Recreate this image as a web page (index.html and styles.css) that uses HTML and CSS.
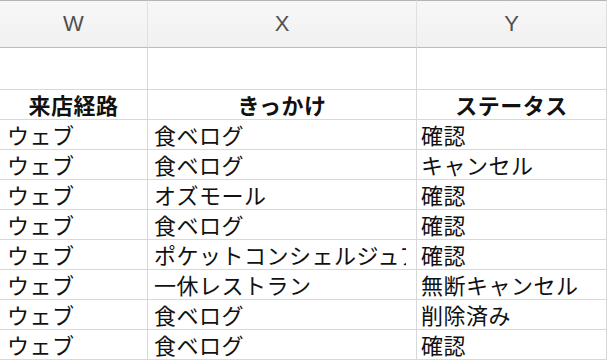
FILE: index.html
```html
<!DOCTYPE html>
<html lang="ja">
<head>
<meta charset="utf-8">
<link rel="stylesheet" href="styles.css">
</head>
<body>
<table class="sheet">
  <colgroup>
    <col class="c-w">
    <col class="c-x">
    <col class="c-y">
  </colgroup>
  <thead>
    <tr class="col-head">
      <th>W</th><th>X</th><th>Y</th>
    </tr>
  </thead>
  <tbody>
    <tr class="blank"><td></td><td></td><td></td></tr>
    <tr class="title">
      <td>来店経路</td><td>きっかけ</td><td>ステータス</td>
    </tr>
    <tr class="data"><td>ウェブ</td><td>食ベログ</td><td>確認</td></tr>
    <tr class="data"><td>ウェブ</td><td>食ベログ</td><td>キャンセル</td></tr>
    <tr class="data"><td>ウェブ</td><td>オズモール</td><td>確認</td></tr>
    <tr class="data"><td>ウェブ</td><td>食ベログ</td><td>確認</td></tr>
    <tr class="data"><td>ウェブ</td><td><span class="clip">ポケットコンシェルジュア</span></td><td>確認</td></tr>
    <tr class="data"><td>ウェブ</td><td>一休レストラン</td><td>無断キャンセル</td></tr>
    <tr class="data"><td>ウェブ</td><td>食ベログ</td><td>削除済み</td></tr>
    <tr class="data"><td>ウェブ</td><td>食ベログ</td><td>確認</td></tr>
  </tbody>
</table>
</body>
</html>
```

FILE: styles.css
```css
html, body {
  margin: 0;
  padding: 0;
  background: #ffffff;
}

.sheet {
  border-collapse: separate;
  border-spacing: 0;
  table-layout: fixed;
  width: 607px;
  font-family: "Noto Sans CJK JP", "Noto Sans", sans-serif;
  color: #111;
}

.c-w { width: 148px; }
.c-x { width: 269px; }
.c-y { width: 190px; }

.sheet th,
.sheet td {
  padding: 0;
  border-right: 1px solid #d8d8d8;
  border-bottom: 1px solid #d8d8d8;
  white-space: nowrap;
}

.col-head th {
  height: 46px;
  border-top: 1px solid #b4b4b4;
  border-bottom: 1px solid #bcbcbc;
  border-right: 1px solid #e0e0e0;
  background: linear-gradient(#f7f7f7, #f1f1f1);
  font-family: "Liberation Sans", Arial, sans-serif;
  font-weight: normal;
  font-size: 22px;
  color: #505050;
  text-align: center;
  vertical-align: middle;
}

.blank td {
  height: 41px;
}

.title td {
  height: 29px;
  font-weight: bold;
  text-align: center;
  font-size: 22px;
  letter-spacing: 0.5px;
  line-height: 29px;
  vertical-align: bottom;
}

.data td {
  height: 29px;
  line-height: 29px;
  font-size: 22px;
  letter-spacing: 0.5px;
  padding-left: 7px;
  vertical-align: bottom;
}

.data td:nth-child(2) { padding-left: 6px; }
.data td:nth-child(3) { padding-left: 4px; }

.clip {
  display: inline-block;
  max-width: 252px;
  overflow: hidden;
  vertical-align: bottom;
}
```
